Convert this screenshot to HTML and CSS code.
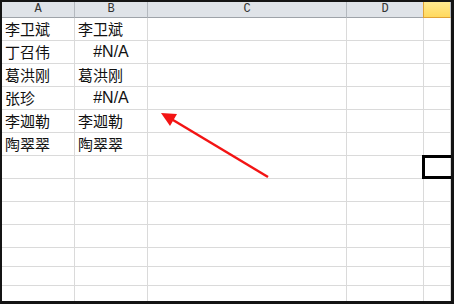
FILE: index.html
```html
<!DOCTYPE html>
<html lang="zh-CN">
<head>
    <meta charset="UTF-8">
    <title>Sheet</title>
    <link rel="stylesheet" href="styles.css">
</head>
<body>
    <div class="sheet">
        <div class="row head">
            <div class="cell">A</div>
            <div class="cell">B</div>
            <div class="cell">C</div>
            <div class="cell">D</div>
            <div class="cell active"></div>
        </div>
        <div class="row"><div class="cell">李卫斌</div><div class="cell">李卫斌</div><div class="cell"></div><div class="cell"></div><div class="cell"></div></div>
        <div class="row"><div class="cell">丁召伟</div><div class="cell err">#N/A</div><div class="cell"></div><div class="cell"></div><div class="cell"></div></div>
        <div class="row"><div class="cell">葛洪刚</div><div class="cell">葛洪刚</div><div class="cell"></div><div class="cell"></div><div class="cell"></div></div>
        <div class="row"><div class="cell">张珍</div><div class="cell err">#N/A</div><div class="cell"></div><div class="cell"></div><div class="cell"></div></div>
        <div class="row"><div class="cell">李迦勒</div><div class="cell">李迦勒</div><div class="cell"></div><div class="cell"></div><div class="cell"></div></div>
        <div class="row"><div class="cell">陶翠翠</div><div class="cell">陶翠翠</div><div class="cell"></div><div class="cell"></div><div class="cell"></div></div>
        <div class="row current"><div class="cell"></div><div class="cell"></div><div class="cell"></div><div class="cell"></div><div class="cell selected"></div></div>
        <div class="row"><div class="cell"></div><div class="cell"></div><div class="cell"></div><div class="cell"></div><div class="cell"></div></div>
        <div class="row"><div class="cell"></div><div class="cell"></div><div class="cell"></div><div class="cell"></div><div class="cell"></div></div>
        <div class="row"><div class="cell"></div><div class="cell"></div><div class="cell"></div><div class="cell"></div><div class="cell"></div></div>
        <div class="row short"><div class="cell"></div><div class="cell"></div><div class="cell"></div><div class="cell"></div><div class="cell"></div></div>
        <div class="row short"><div class="cell"></div><div class="cell"></div><div class="cell"></div><div class="cell"></div><div class="cell"></div></div>
        <div class="row short"><div class="cell"></div><div class="cell"></div><div class="cell"></div><div class="cell"></div><div class="cell"></div></div>

        <svg class="arrow" width="449" height="299" viewBox="0 0 449 299">
            <line x1="266" y1="175" x2="166" y2="115" stroke="#f31414" stroke-width="2.5"/>
            <polygon points="159,111 175,112 168,124" fill="#f31414"/>
        </svg>
    </div>
</body>
</html>
```

FILE: styles.css
```css
body {
    margin: 0;
    background: #141414;
}
.sheet {
    position: relative;
    width: 449px;
    height: 299px;
    margin: 2px 3px 3px 2px;
    background: #fff;
    overflow: hidden;
}
.row {
    display: grid;
    grid-template-columns: 73px 73px 199px 77px 1fr;
    height: 23px;
}
.row.short {
    height: 19px;
}
.cell {
    box-sizing: border-box;
    border-right: 1px solid #dadada;
    border-bottom: 1px solid #dadada;
    padding-left: 3px;
    font-family: "Noto Sans CJK SC", "Microsoft YaHei", sans-serif;
    font-size: 15px;
    line-height: 22px;
    color: #111;
    white-space: nowrap;
}
.cell.err {
    padding-left: 0;
    text-align: center;
    font-family: "Liberation Sans", Arial, sans-serif;
    font-size: 16px;
}
.head {
    height: 16px;
}
.head .cell {
    padding: 0;
    background: #dfe3e8;
    border-right-color: #b4b9bf;
    border-bottom-color: #9ea3a9;
    text-align: center;
    font-family: "Liberation Mono", monospace;
    font-size: 12px;
    line-height: 15px;
    color: #333;
}
.head .cell.active {
    background: linear-gradient(#ffe98f, #ffd95e);
    border-left: 1px solid #e0a236;
    border-bottom-color: #e0a236;
    margin-left: -1px;
}
.current .cell:first-child {
    position: relative;
}
.current .cell:first-child::before {
    content: "";
    position: absolute;
    left: -2px;
    top: 0;
    width: 2px;
    height: 23px;
    background: #d58b1a;
}
.selected {
    position: relative;
}
.selected::after {
    content: "";
    position: absolute;
    left: -2px;
    top: -1px;
    right: -4px;
    bottom: -1px;
    border: 3px solid #000;
}
.arrow {
    position: absolute;
    left: 0;
    top: 0;
}
```
